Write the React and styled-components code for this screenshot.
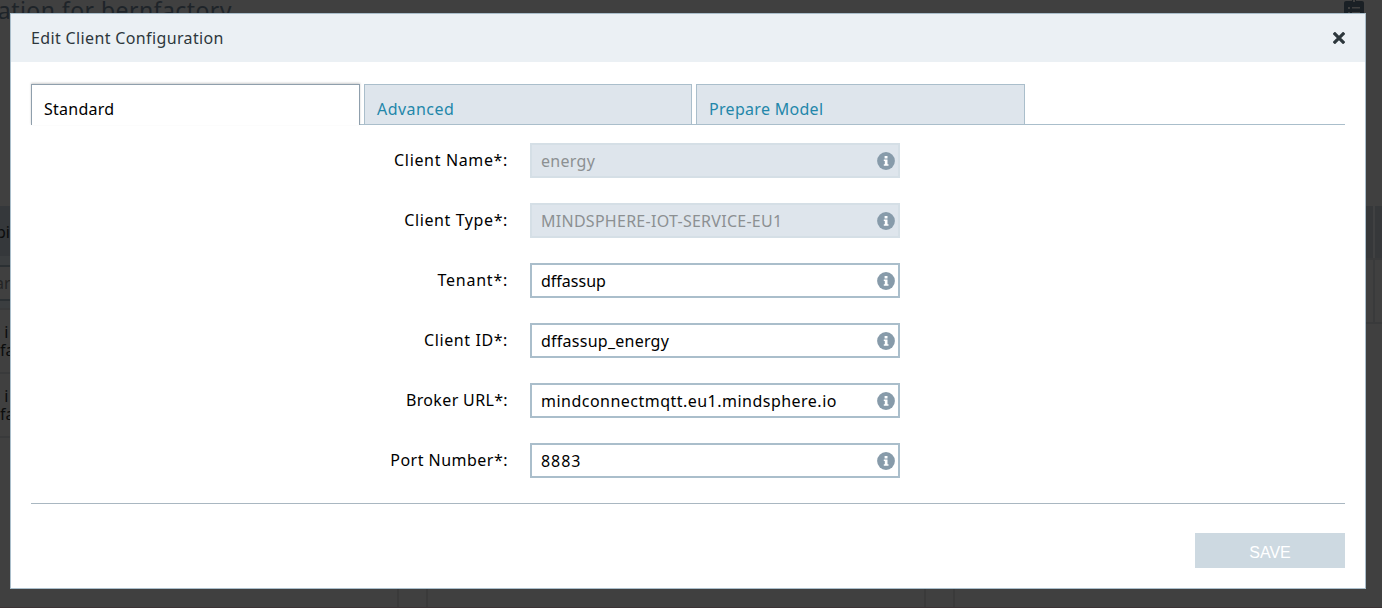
import React from "react";
import styled, { createGlobalStyle } from "styled-components";

const GlobalStyle = createGlobalStyle`
  *, *::before, *::after { box-sizing: border-box; }
  body { margin: 0; background: #404040; font-family: "Noto Sans", "Open Sans", sans-serif; font-size: 16px; color: #000; }
`;

const Page = styled.div`
  position: relative;
  width: 1382px;
  height: 608px;
  overflow: hidden;
  background: #404040;
  display: flex;
  flex-direction: column;
  border-bottom: 1px solid #3b3335;
`;

const PageHeader = styled.div`
  flex: none;
  height: 206px;
  display: flex;
  justify-content: space-between;
  align-items: flex-start;
  padding-right: 18px;
`;

const PageTitle = styled.div`
  width: 232px;
  display: flex;
  justify-content: flex-end;
  white-space: nowrap;
  font-size: 23px;
  line-height: 20px;
  letter-spacing: 0.45px;
  color: #1e2429;
`;

const Table = styled.div`
  flex: none;
  display: flex;
  justify-content: space-between;
  height: 290px;
`;

const NameColumn = styled.div`
  width: 40px;
`;

const ActionColumn = styled.div`
  width: 17px;
`;

const Cell = styled.div`
  height: ${(p) => p.$height}px;
  padding-top: ${(p) => p.$top || 0}px;
  text-indent: ${(p) => p.$indent || 0}px;
  background: ${(p) => p.$fill || "transparent"};
  border-bottom: ${(p) => (p.$line ? "2px solid #393a3b" : "0")};
  color: #0b0c0d;
  line-height: 18px;
  white-space: pre;
`;

const FilterBox = styled.div`
  height: 36px;
  padding-top: 7px;
  text-indent: -5px;
  border: solid #2b3033;
  border-width: 2px 0;
  background: #404040;
  line-height: 18px;
  color: #242424;
`;

const SplitCell = styled.div`
  height: ${(p) => p.$height}px;
  background: ${(p) => p.$fill};
  border-bottom: 2px solid #393a3b;
  padding-left: 8px;
  &::before {
    content: "";
    display: block;
    width: 2px;
    height: 100%;
    background: ${(p) => p.$rule};
  }
`;

const Cards = styled.div`
  flex: 1;
  display: grid;
  grid-template-columns: 399px 500px 460px;
  column-gap: 27px;
`;

const Card = styled.div`
  border: solid #3a3a3a;
  border-width: 0 2px;
  &:first-child { border-left: 0; }
`;

const Modal = styled.section`
  position: absolute;
  left: 10px;
  top: 13px;
  width: 1356px;
  height: 576px;
  display: flex;
  flex-direction: column;
  background: #fff;
  border: 1px solid #aabecb;
`;

const ModalHeader = styled.header`
  flex: none;
  height: 48px;
  display: flex;
  align-items: center;
  justify-content: space-between;
  padding: 0 20px;
  background: #ebf0f4;
  color: #2d373c;
`;

const ModalTitle = styled.div`
  letter-spacing: 0.36px;
  line-height: 24px;
`;

const CloseButton = styled.button`
  border: 0;
  padding: 0;
  width: 12px;
  height: 12px;
  background: none;
  display: flex;
`;

const ModalBody = styled.div`
  flex: 1;
  display: flex;
  flex-direction: column;
  padding: 22px 20px 20px;
`;

const TabBar = styled.nav`
  flex: none;
  height: 41px;
  display: flex;
  gap: 4px;
  border-bottom: 1px solid #aabecb;
`;

const Tab = styled.div`
  width: ${(p) => p.$width}px;
  height: ${(p) => (p.$active ? 41 : 40)}px;
  padding: 12px 12px 0;
  line-height: 24px;
  border: 1px solid ${(p) => (p.$active ? "#8f9fac" : "#aabecb")};
  border-bottom: 0;
  background: ${(p) => (p.$active ? "#fff" : "#dee5ec")};
  color: ${(p) => (p.$active ? "#000" : "#2387aa")};
  box-shadow: ${(p) => (p.$active ? "0 -1px 2px rgba(0,0,0,.2)" : "none")};
  letter-spacing: ${(p) => p.$spacing}px;
`;

const Form = styled.div`
  display: flex;
  flex-direction: column;
  gap: 25px;
  padding-top: 18px;
`;

const Field = styled.div`
  height: 35px;
  display: grid;
  grid-template-columns: 477px 370px;
  column-gap: 22px;
`;

const Label = styled.label`
  display: flex;
  justify-content: flex-end;
  padding-top: 5px;
  line-height: 24px;
  letter-spacing: ${(p) => p.$spacing}px;
`;

const InputBox = styled.div`
  display: flex;
  align-items: center;
  justify-content: space-between;
  padding: 0 3px 0 9px;
  border: 2px solid ${(p) => (p.$disabled ? "#d5dfe6" : "#aabecb")};
  background: ${(p) => (p.$disabled ? "#dee5ec" : "#fff")};
  color: ${(p) => (p.$disabled ? "#8c9092" : "#000")};
`;

const Value = styled.span`
  padding-top: 2px;
  line-height: 23px;
  letter-spacing: ${(p) => p.$spacing}px;
`;

const InfoSvg = styled.svg`
  display: block;
  width: 18px;
  height: 18px;
`;

const Footer = styled.footer`
  margin-top: 25px;
  border-top: 1px solid #a9b7c1;
  padding-top: 29px;
  display: flex;
  justify-content: flex-end;
`;

const SaveButton = styled.button`
  width: 150px;
  height: 35px;
  border: 0;
  padding: 4px 0 0;
  background: #cdd9e1;
  color: #fff;
  font: 16px "Liberation Sans", Arial, sans-serif;
`;

const InfoIcon = () => (
  <InfoSvg viewBox="0 0 18 18">
    <circle cx="9" cy="9" r="8.9" fill="#879baa" />
    <path d="M7.6 4h2.9v2.4H7.6zM6.8 7.4h3.7v4.8h1v1.6H6.8v-1.6h1V9h-1z" fill="#fff" />
  </InfoSvg>
);

const CloseIcon = () => (
  <svg width="12" height="12" viewBox="0 0 12 12">
    <path d="M1.9 1.9l8.2 8.2M10.1 1.9l-8.2 8.2" stroke="#2d373c" strokeWidth="3.2" strokeLinecap="square" strokeLinejoin="round" />
  </svg>
);

const ListIcon = () => (
  <svg width="20" height="24" viewBox="0 0 20 24">
    <path d="M2 1h6V0h4v1h6q2 0 2 2v19q0 2-2 2H2q-2 0-2-2V3q0-2 2-2z" fill="#1a2025" />
    <path d="M9 0h2v2H9zM4 7h2v2H4zM8 7h8v1.5H8zM4 12h2v2H4zM8 12h8v1.5H8z" fill="#404040" />
  </svg>
);

const tabs = [
  { text: "Standard", width: 329, spacing: 0.25, active: true },
  { text: "Advanced", width: 328, spacing: 0.45 },
  { text: "Prepare Model", width: 329, spacing: 0.3 },
];

const fields = [
  { label: "Client Name*:", labelSpacing: 0.65, value: "energy", spacing: 0.3, disabled: true },
  { label: "Client Type*:", labelSpacing: 0.6, value: "MINDSPHERE-IOT-SERVICE-EU1", spacing: 0.27, disabled: true },
  { label: "Tenant*:", labelSpacing: 0.75, value: "dffassup", spacing: 0 },
  { label: "Client ID*:", labelSpacing: 0.6, value: "dffassup_energy", spacing: 0.25 },
  { label: "Broker URL*:", labelSpacing: 0.35, value: "mindconnectmqtt.eu1.mindsphere.io", spacing: 0.48 },
  { label: "Port Number*:", labelSpacing: 0.48, value: "8883", spacing: 0.95 },
];

export default function App() {
  return (
    <>
      <GlobalStyle />
      <Page>
        <PageHeader>
          <PageTitle>ation for bernfactory</PageTitle>
          <ListIcon />
        </PageHeader>
        <Table>
          <NameColumn>
            <Cell $height={50} $top={17} $indent={-4} $fill="#35383b">pi</Cell>
            <Cell $height={9} $fill="#3b3e40" />
            <FilterBox>ar</FilterBox>
            <Cell $height={9} $fill="#3b3e40" $line />
            <Cell $height={64} $top={13} $line>{" i\nfa"}</Cell>
            <Cell $height={64} $top={13} $line>{" i\nfa"}</Cell>
          </NameColumn>
          <ActionColumn>
            <SplitCell $height={54} $fill="#36383a" $rule="#404142" />
            <SplitCell $height={64} $fill="#404040" $rule="#393a3b" />
          </ActionColumn>
        </Table>
        <Cards>
          <Card />
          <Card />
          <Card />
        </Cards>
        <Modal>
          <ModalHeader>
            <ModalTitle>Edit Client Configuration</ModalTitle>
            <CloseButton aria-label="Close"><CloseIcon /></CloseButton>
          </ModalHeader>
          <ModalBody>
            <TabBar>
              {tabs.map((t) => (
                <Tab key={t.text} $width={t.width} $active={t.active} $spacing={t.spacing}>{t.text}</Tab>
              ))}
            </TabBar>
            <Form>
              {fields.map((f) => (
                <Field key={f.label}>
                  <Label $spacing={f.labelSpacing}>{f.label}</Label>
                  <InputBox $disabled={f.disabled}>
                    <Value $spacing={f.spacing}>{f.value}</Value>
                    <InfoIcon />
                  </InputBox>
                </Field>
              ))}
            </Form>
            <Footer>
              <SaveButton>SAVE</SaveButton>
            </Footer>
          </ModalBody>
        </Modal>
      </Page>
    </>
  );
}
